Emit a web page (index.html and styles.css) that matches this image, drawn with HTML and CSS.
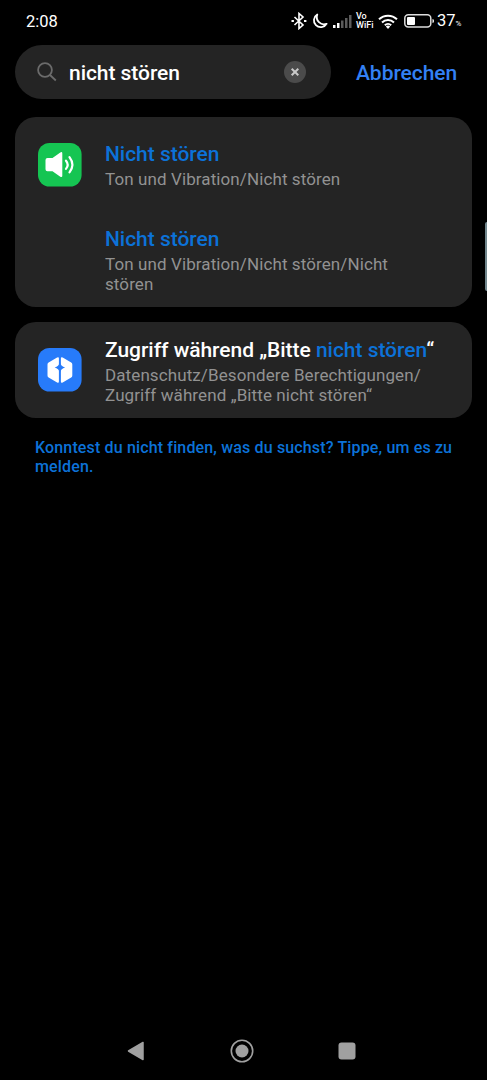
FILE: index.html
```html
<!DOCTYPE html>
<html lang="de">
<head>
<meta charset="utf-8">
<title>Einstellungen – Suche</title>
<link rel="stylesheet" href="styles.css">
</head>
<body>
<div class="screen">
  <header class="status">
    <span class="time">2:08</span>
    <svg class="bt" width="16" height="18" viewBox="0 0 16 18" fill="none" stroke="#fff" stroke-width="1.6"><path d="M3.5 5l8.5 8-4 3.5V1.500l4 3.500-8.500 8"/><path d="M.5 9h2.400M13 9h2.400" stroke-width="2.200"/></svg>
    <svg class="moon" width="16" height="16" viewBox="0 0 16 16" fill="none" stroke="#fff" stroke-width="1.800" stroke-linejoin="round"><path d="M5.300 1.500A6.800 6.800 0 1 0 14.600 10.800A7.200 7.200 0 0 1 5.300 1.500z"/></svg>
    <svg class="signal" width="19" height="13" viewBox="0 0 19 13"><g fill="#fff"><path d="M0 10h2.500v3H0zM4 8h2.500v5H4z"/></g><path fill="#5c5c5c" d="M8 5.500h2.500V13H8zM12 3h2.500v10H12zM16 0h2.500v13H16z"/></svg>
    <span class="vowifi"><span>Vo</span><span>WiFi</span></span>
    <svg class="wifi" width="20" height="15" viewBox="0 0 20 15" fill="none" stroke="#fff" stroke-width="2"><path d="M1 5.300a13 13 0 0 1 18 0M4 8.500a8.600 8.600 0 0 1 12 0M6.800 11.300a4.700 4.700 0 0 1 6.400 0"/><path fill="#fff" stroke="none" d="M7.800 12.400a3.300 3.300 0 0 1 4.400 0L10 14.900z"/></svg>
    <svg class="battery" width="31" height="14" viewBox="0 0 31 14"><rect x=".8" y=".8" width="26" height="12.200" rx="3.500" fill="none" stroke="#ddd" stroke-width="1.500"/><rect x="3" y="3" width="8" height="8" rx="1" fill="#fff"/><path d="M28.500 5q1.500 0 1.500 2t-1.500 2z" fill="#fff"/></svg>
    <span class="percent">37<small>%</small></span>
  </header>

  <div class="search-row">
    <div class="search">
      <svg class="lens" width="20" height="20" viewBox="0 0 20 20" fill="none" stroke="#6b6b6b" stroke-width="1.800"><circle cx="8" cy="8" r="6.900"/><path d="M13 13l5.800 5.500"/></svg>
      <span class="query">nicht stören</span>
      <svg class="clear" width="22" height="22" viewBox="0 0 22 22"><circle cx="11" cy="11" r="11" fill="#4b4b4b"/><path d="M7.700 7.700l6.600 6.600M14.300 7.700l-6.600 6.600" stroke="#c9c9c9" stroke-width="2"/></svg>
    </div>
    <span class="cancel">Abbrechen</span>
  </div>

  <main>
    <section class="card">
      <div class="row">
        <svg class="icon" width="44" height="44" viewBox="0 0 44 44"><rect width="43.600" height="43.600" rx="11.500" fill="#15c552"/><path d="M9.500 15h5L22.300 9.500q2-1.100 2 1v22.200q0 2.100-2 1L14.500 28.300h-5q-2 0-2-2V17q0-2 2-2z" fill="#fff"/><path d="M28 17.700q3.400 4.100 0 8.200M31.500 14.200q5.800 7.600 0 15.200" fill="none" stroke="#fff" stroke-width="2.200" stroke-linecap="round"/></svg>
        <div class="text"><div class="title"><span class="hit">Nicht stören</span></div><div class="path">Ton und Vibration/Nicht stören</div></div>
      </div>
      <div class="row">
        <span class="icon"></span>
        <div class="text"><div class="title"><span class="hit">Nicht stören</span></div><div class="path">Ton und Vibration/Nicht stören/Nicht<br>stören</div></div>
      </div>
    </section>
    <section class="card">
      <div class="row tall">
        <svg class="icon" width="44" height="44" viewBox="0 0 44 44"><rect width="43.600" height="43.600" rx="11.500" fill="#277bfa"/><path d="M20.900 10.500q0-2-1.800-1L10.600 14.400Q9.500 15 9.500 16.500v11q0 1.500 1.100 2.100l8.500 4.900q1.800 1 1.800-1zM22.900 10.500q0-2 1.800-1l8.500 4.900q1.100.6 1.100 2.100v11q0 1.500-1.100 2.100l-8.500 4.900q-1.800 1-1.800-1z" fill="#fff"/><path d="M21.900 14.400q1.200 4 5.200 5-4 1-5.200 5-1.200-4-5.200-5 4-1 5.200-5z" fill="#277bfa"/></svg>
        <div class="text"><div class="title">Zugriff während „Bitte <span class="hit">nicht stören</span>“</div><div class="path">Datenschutz/Besondere Berechtigungen/<br>Zugriff während „Bitte nicht stören“</div></div>
      </div>
    </section>
    <p class="report">Konntest du nicht finden, was du suchst? Tippe, um es zu<br>melden.</p>
  </main>

  <nav class="nav">
    <svg width="18" height="20" viewBox="0 0 18 20"><path d="M1.500 10L16 1.500v17z" fill="#a0a0a0" stroke="#a0a0a0" stroke-width="1.500" stroke-linejoin="round"/></svg>
    <svg width="24" height="24" viewBox="0 0 24 24"><circle cx="12" cy="12" r="10.700" fill="none" stroke="#a0a0a0" stroke-width="1.600"/><circle cx="12" cy="12" r="6.500" fill="#a0a0a0"/></svg>
    <svg width="18" height="18" viewBox="0 0 18 18"><rect x=".5" y=".5" width="17" height="17" rx="3" fill="#a0a0a0"/></svg>
  </nav>
  <div class="edge-handle"></div>
</div>
</body>
</html>
```
FILE: styles.css
```css
* { box-sizing: border-box; }
body { margin: 0; background: #000; font-family: Roboto, sans-serif; font-variant-ligatures: none; }
svg { display: block; flex: none; }
.screen { position: relative; width: 487px; height: 1080px; display: flex; flex-direction: column; color: #fff; overflow: hidden; white-space: nowrap; }

.status { height: 45px; padding: 0 0 3px 26px; display: flex; align-items: center; }
.time { width: 265px; font-size: 16.500px; line-height: 20px; padding-top: 2px; }
.moon { margin-left: 5px; }
.signal { margin-left: 5px; }
.vowifi { margin-left: 4px; width: 18px; display: flex; flex-direction: column; font-size: 9px; line-height: 9px; font-weight: 500; }
.wifi { margin-left: 4px; }
.battery { margin-left: 6px; }
.percent { margin-left: 2px; font-size: 16.500px; line-height: 20px; padding-top: 3px; }
.percent small { font-size: 8px; }

.search-row { display: flex; align-items: center; }
.search { margin-left: 15px; width: 316px; height: 54px; padding: 0 25px 0 22px; border-radius: 27px; background: #242424; display: flex; align-items: center; }
.query { flex: 1; margin-left: 12px; font-size: 21px; line-height: 26px; font-weight: 500; letter-spacing: -.05px; padding-top: 2px; }
.cancel { margin-left: 25px; padding-top: 2px; font-size: 21px; letter-spacing: -.05px; line-height: 26px; font-weight: 500; color: #3380f5; }

main { flex: 1; padding: 18px 15px 0; }
.card { margin-bottom: 15px; border-radius: 21px; background: #242424; }
.row { height: 95px; padding-left: 23px; display: flex; align-items: center; }
.tall { height: 96px; }
.tall .text { padding-top: 2px; }
.icon { width: 44px; margin-right: 23px; }
.title { font-size: 21px; letter-spacing: -.03px; line-height: 26px; font-weight: 500; }
.hit { color: #0c72d8; }
.path { margin-top: 2px; font-size: 17px; letter-spacing: .1px; line-height: 20px; color: #929292; }
.report { margin: 20px 0 0 20px; font-size: 16px; letter-spacing: .15px; line-height: 19px; font-weight: 500; color: #0c72d8; }

.nav { height: 60px; padding: 2px 131px 0 127px; display: flex; align-items: center; justify-content: space-between; }
.edge-handle { position: absolute; right: 0; top: 222px; width: 2px; height: 69px; background: #71868d; border-radius: 2px 0 0 2px; }
```
